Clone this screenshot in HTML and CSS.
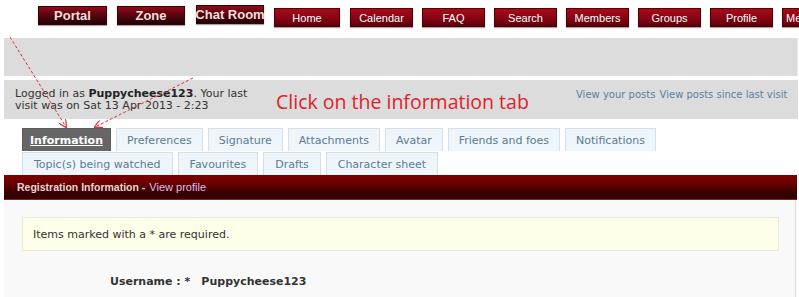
FILE: index.html
```html
<!DOCTYPE html>
<html>
<head>
<meta charset="utf-8">
<link rel="stylesheet" href="styles.css">
</head>
<body>
<div class="page">
  <nav class="topnav">
    <a class="btn big b-portal">Portal</a>
    <a class="btn big b-zone">Zone</a>
    <a class="btn big b-chat">Chat Room</a>
    <a class="btn small b-home">Home</a>
    <a class="btn small">Calendar</a>
    <a class="btn small">FAQ</a>
    <a class="btn small">Search</a>
    <a class="btn small">Members</a>
    <a class="btn small">Groups</a>
    <a class="btn small">Profile</a>
    <a class="btn small b-more">Messages</a>
  </nav>
  <div class="band"></div>
  <div class="infobar">
    <div class="logged">Logged in as <b>Puppycheese123</b>. Your last<br>visit was on Sat 13 Apr 2013 - 2:23</div>
    <div class="hint">Click on the information tab</div>
    <div class="links"><a>View your posts</a> <a>View posts since last visit</a></div>
  </div>
  <div class="tabs">
    <div class="tabrow">
      <a class="tab active">Information</a>
      <a class="tab">Preferences</a>
      <a class="tab">Signature</a>
      <a class="tab">Attachments</a>
      <a class="tab">Avatar</a>
      <a class="tab">Friends and foes</a>
      <a class="tab">Notifications</a>
    </div>
    <div class="tabrow">
      <a class="tab wide">Topic(s) being watched</a>
      <a class="tab wide">Favourites</a>
      <a class="tab wide">Drafts</a>
      <a class="tab wide">Character sheet</a>
    </div>
  </div>
  <div class="panelhead">Registration Information - <a class="vp">View profile</a></div>
  <div class="panel">
    <div class="note">Items marked with a * are required.</div>
    <div class="field"><span class="lbl">Username : *</span><span class="val">Puppycheese123</span></div>
  </div>
  <svg class="arrows" width="799" height="297" viewBox="0 0 799 297">
    <defs>
      <marker id="ah" markerWidth="8" markerHeight="8" refX="7" refY="4" orient="auto" markerUnits="userSpaceOnUse">
        <path d="M0,0 L8,4 L0,8" fill="none" stroke="#e0323a" stroke-width="1.2"/>
      </marker>
    </defs>
    <line x1="10" y1="37" x2="66" y2="127" stroke="#e0323a" stroke-width="1" stroke-dasharray="3,2" marker-end="url(#ah)"/>
    <line x1="193" y1="78" x2="95" y2="127" stroke="#e0323a" stroke-width="1" stroke-dasharray="3,2" marker-end="url(#ah)"/>
  </svg>
</div>
</body>
</html>
```
FILE: styles.css
```css
html, body {
  margin: 0;
  padding: 0;
  background: #ffffff;
}
.page {
  position: relative;
  width: 799px;
  height: 297px;
  overflow: hidden;
  font-family: "DejaVu Sans", Verdana, sans-serif;
  font-size: 11px;
  color: #333;
}
.topnav {
  display: flex;
  align-items: flex-start;
  gap: 9px;
  padding: 6px 0 0 38px;
  height: 38px;
  box-sizing: border-box;
  white-space: nowrap;
}
.btn {
  display: flex;
  align-items: center;
  justify-content: center;
  flex: none;
  color: #fff;
  box-sizing: border-box;
  border: 1px solid #3a0006;
  box-shadow: 0 1px 1px rgba(0,0,0,0.35);
}
.big {
  font-family: "Liberation Sans", Arial, sans-serif;
  font-weight: bold;
  font-size: 13px;
  width: 69px;
  height: 19px;
  background: linear-gradient(#8e0c17 0%, #5a0610 45%, #220104 100%);
  color: #f2dede;
  margin-right: 1px;
}
.b-zone { width: 68px; }
.b-chat { width: 68px; margin-top: -1px; margin-left: 1px; }
.small {
  font-family: "Liberation Sans", Arial, sans-serif;
  font-size: 11px;
  width: 63px;
  height: 19px;
  margin-top: 2px;
  background: linear-gradient(#a80a1a 0%, #8a0412 50%, #5c0009 100%);
  border-color: #4a0006;
}
.b-home { width: 66px; margin-right: 1px; }
.b-more { justify-content: flex-start; padding-left: 3px; }
.band {
  height: 38px;
  margin: 0 1px 0 4px;
  background: #dcdcdc;
  border-right: 1px solid #e8e8e8;
}
.infobar {
  display: flex;
  align-items: flex-start;
  height: 39px;
  margin: 4px 1px 0 4px;
  background: #dcdcdc;
  box-sizing: border-box;
  padding: 8px 0 0 11px;
}
.logged {
  width: 261px;
  line-height: 12px;
  color: #333;
}
.logged b { color: #222; }
.hint {
  font-family: "Open Sans", "DejaVu Sans", sans-serif;
  font-size: 19.5px;
  color: #e0222a;
  margin-top: 2px;
  line-height: 24px;
  width: 300px;
}
.links {
  font-size: 10px;
  color: #5a7fa0;
  margin-top: 1px;
  white-space: nowrap;
}
.links a { color: #5a7fa0; margin-right: 1px; }
.tabs {
  padding: 9px 0 0 22px;
  display: flex;
  flex-direction: column;
  gap: 1px;
}
.tabrow {
  display: flex;
  gap: 5px;
}
.tab {
  display: flex;
  align-items: center;
  height: 23px;
  box-sizing: border-box;
  padding: 0 10px;
  background: #eef6fb;
  border: 1px solid #d4e0e8;
  border-bottom: none;
  color: #5b7a93;
  white-space: nowrap;
}
.tab.wide { padding: 0 11px; }
.tab.active {
  background: #666666;
  border-color: #5c5c5c;
  color: #fff;
  font-weight: bold;
  text-decoration: underline;
  padding: 0 7px;
}
.panelhead {
  margin: 0 2px 0 4px;
  height: 25px;
  box-sizing: border-box;
  padding: 0 0 0 13px;
  display: flex;
  align-items: center;
  font-family: "Liberation Sans", Arial, sans-serif;
  font-size: 10.5px;
  font-weight: bold;
  color: #e6d6d6;
  background: linear-gradient(#7c0000 0%, #6a0000 35%, #3a0000 70%, #2c0000 100%);
  border-bottom: 1px solid #8a2020;
}
.panelhead .vp {
  font-weight: normal;
  font-size: 11px;
  color: #d8c0ea;
  margin-left: 4px;
}
.panel {
  margin: 0 3px 0 4px;
  height: 120px;
  background: #f9f9fa;
  border-right: 1px solid #dcdcdc;
  padding: 17px 0 0 18px;
  box-sizing: border-box;
}
.note {
  width: 757px;
  height: 34px;
  box-sizing: border-box;
  background: #fffee8;
  border: 1px solid #e9e9df;
  display: flex;
  align-items: center;
  padding-left: 10px;
  color: #333;
}
.field {
  display: flex;
  margin-top: 24px;
  font-weight: bold;
  color: #333;
  padding-left: 88px;
}
.lbl { margin-right: 11px; }
.arrows {
  position: absolute;
  left: 0;
  top: 0;
  pointer-events: none;
}
```
